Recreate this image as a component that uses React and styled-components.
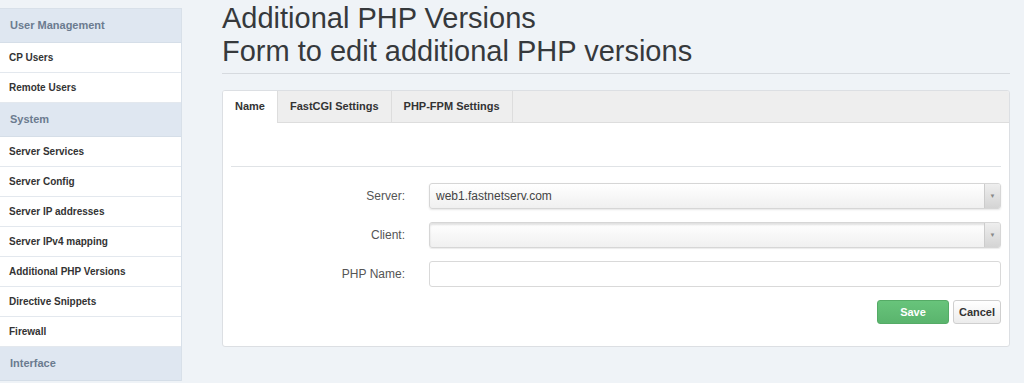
import React from "react";
import styled, { createGlobalStyle } from "styled-components";

const GlobalStyle = createGlobalStyle`
  body {
    margin: 0;
    background: #eff3f7;
    font-family: "Liberation Sans", Arial, sans-serif;
  }
`;

const Layout = styled.div`
  display: flex;
  align-items: flex-start;
  height: 383px;
  overflow: hidden;
`;

const Sidebar = styled.nav`
  flex-shrink: 0;
  width: 181px;
  margin-top: 8px;
  background: #fff;
  border-top: 1px solid #d8e0e9;
  border-right: 1px solid #d8e0e9;
`;

const NavHeader = styled.div`
  height: 33px;
  line-height: 33px;
  padding-left: 10px;
  background: #dfe7f1;
  color: #6b7b8f;
  font-size: 11px;
  font-weight: bold;
  border-bottom: 1px solid #d5dee8;
`;

const NavItem = styled.a`
  display: block;
  height: 29px;
  line-height: 29px;
  padding-left: 9px;
  color: #333;
  font-size: 10px;
  font-weight: bold;
  text-decoration: none;
  border-bottom: 1px solid #e3e8ee;
`;

const Main = styled.main`
  flex: 1;
  padding: 0 14px 0 40px;
`;

const Title = styled.h1`
  margin: 0;
  padding-top: 2px;
  font-size: 29px;
  line-height: 33px;
  font-weight: normal;
  color: #36393c;
`;

const Rule = styled.div`
  margin-top: 5px;
  border-top: 1px solid #d6dadf;
`;

const Panel = styled.section`
  margin-top: 16px;
  background: #fff;
  border: 1px solid #dcdfe3;
  border-radius: 3px;
  overflow: hidden;
`;

const TabBar = styled.div`
  display: flex;
  height: 31px;
  background: #eeeeee;
  border-bottom: 1px solid #dddddd;
`;

const Tab = styled.div`
  padding: 0 12px;
  height: ${(p) => (p.$active ? "32px" : "31px")};
  line-height: 31px;
  font-size: 11px;
  font-weight: bold;
  color: #333;
  border-right: 1px solid #dddddd;
  background: ${(p) => (p.$active ? "#fff" : "transparent")};
`;

const PanelBody = styled.div`
  padding: 43px 8px 22px 8px;
`;

const Divider = styled.div`
  border-top: 1px solid #e0e3e6;
  margin-bottom: 16px;
`;

const Form = styled.div`
  display: flex;
  flex-direction: column;
  gap: 13px;
`;

const Row = styled.div`
  display: grid;
  grid-template-columns: 174px 1fr;
  column-gap: 24px;
  align-items: center;
`;

const Label = styled.label`
  text-align: right;
  font-size: 12px;
  color: #555;
`;

const Select = styled.div`
  display: flex;
  height: 26px;
  box-sizing: border-box;
  border: 1px solid #d6d6d6;
  border-radius: 3px;
  background: linear-gradient(#ffffff, #f0f0f0);
  box-shadow: ${(p) =>
    p.$inset
      ? "inset 0 2px 2px rgba(0,0,0,0.12), 0 1px 1px rgba(0,0,0,0.08)"
      : "0 1px 2px rgba(0,0,0,0.1)"};
  overflow: hidden;
`;

const SelectValue = styled.span`
  flex: 1;
  padding-left: 6px;
  line-height: 24px;
  font-size: 12px;
  color: #444;
`;

const SelectArrow = styled.span`
  width: 15px;
  display: flex;
  align-items: center;
  justify-content: center;
  background: linear-gradient(#eeeeee, #d4d4d4);
  border-left: 1px solid #cccccc;
  color: #888;
  font-size: 6px;
`;

const Input = styled.input`
  height: 26px;
  box-sizing: border-box;
  border: 1px solid #d9d9d9;
  border-radius: 3px;
  background: #fff;
`;

const Actions = styled.div`
  display: flex;
  justify-content: flex-end;
  gap: 4px;
`;

const Button = styled.button`
  height: 24px;
  width: ${(p) => (p.$primary ? "72px" : "48px")};
  padding: 0;
  box-sizing: border-box;
  border-radius: 3px;
  font-family: inherit;
  font-size: 11px;
  font-weight: bold;
  color: ${(p) => (p.$primary ? "#fff" : "#333")};
  border: 1px solid ${(p) => (p.$primary ? "#55ab66" : "#cfcfcf")};
  background: ${(p) =>
    p.$primary
      ? "linear-gradient(#68c47b, #5ab46d)"
      : "linear-gradient(#ffffff, #ececec)"};
`;

const menu = [
  { header: "User Management", items: ["CP Users", "Remote Users"] },
  {
    header: "System",
    items: [
      "Server Services",
      "Server Config",
      "Server IP addresses",
      "Server IPv4 mapping",
      "Additional PHP Versions",
      "Directive Snippets",
      "Firewall",
    ],
  },
  { header: "Interface", items: [] },
];

export default function App() {
  return (
    <>
      <GlobalStyle />
      <Layout>
        <Sidebar>
          {menu.map((group) => (
            <React.Fragment key={group.header}>
              <NavHeader>{group.header}</NavHeader>
              {group.items.map((item) => (
                <NavItem key={item} href="#">
                  {item}
                </NavItem>
              ))}
            </React.Fragment>
          ))}
        </Sidebar>

        <Main>
          <Title>
            Additional PHP Versions
            <br />
            Form to edit additional PHP versions
          </Title>
          <Rule />

          <Panel>
            <TabBar>
              <Tab $active>Name</Tab>
              <Tab>FastCGI Settings</Tab>
              <Tab>PHP-FPM Settings</Tab>
            </TabBar>
            <PanelBody>
              <Divider />
              <Form>
                <Row>
                  <Label>Server:</Label>
                  <Select>
                    <SelectValue>web1.fastnetserv.com</SelectValue>
                    <SelectArrow>▼</SelectArrow>
                  </Select>
                </Row>
                <Row>
                  <Label>Client:</Label>
                  <Select $inset>
                    <SelectValue />
                    <SelectArrow>▼</SelectArrow>
                  </Select>
                </Row>
                <Row>
                  <Label>PHP Name:</Label>
                  <Input type="text" />
                </Row>
                <Actions>
                  <Button $primary>Save</Button>
                  <Button>Cancel</Button>
                </Actions>
              </Form>
            </PanelBody>
          </Panel>
        </Main>
      </Layout>
    </>
  );
}
